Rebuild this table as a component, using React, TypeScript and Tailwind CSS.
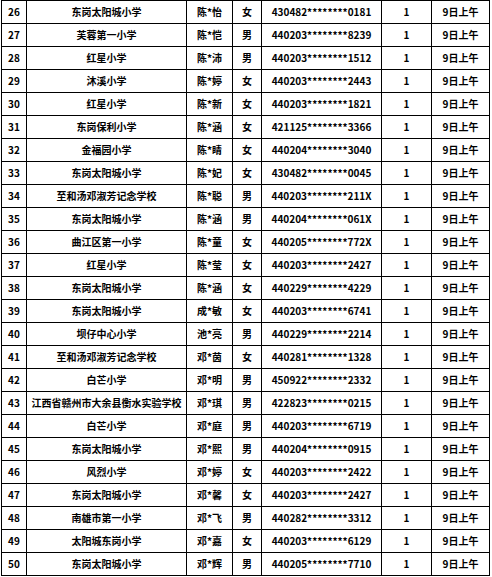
const rows: [string, string, string, string, string][] = [
  ["26", "东岗太阳城小学", "陈*怡", "女", "430482********0181"],
  ["27", "芙蓉第一小学", "陈*恺", "男", "440203********8239"],
  ["28", "红星小学", "陈*沛", "男", "440203********1512"],
  ["29", "沐溪小学", "陈*婷", "女", "440203********2443"],
  ["30", "红星小学", "陈*新", "女", "440203********1821"],
  ["31", "东岗保利小学", "陈*涵", "女", "421125********3366"],
  ["32", "金福园小学", "陈*睛", "女", "440204********3040"],
  ["33", "东岗太阳城小学", "陈*妃", "女", "430482********0045"],
  ["34", "至和汤邓淑芳记念学校", "陈*聪", "男", "440203********211X"],
  ["35", "东岗太阳城小学", "陈*涵", "男", "440204********061X"],
  ["36", "曲江区第一小学", "陈*童", "女", "440205********772X"],
  ["37", "红星小学", "陈*莹", "女", "440203********2427"],
  ["38", "东岗太阳城小学", "陈*涵", "女", "440229********4229"],
  ["39", "东岗太阳城小学", "成*敏", "女", "440203********6741"],
  ["40", "坝仔中心小学", "池*亮", "男", "440229********2214"],
  ["41", "至和汤邓淑芳记念学校", "邓*茵", "女", "440281********1328"],
  ["42", "白芒小学", "邓*明", "男", "450922********2332"],
  ["43", "江西省赣州市大余县衡水实验学校", "邓*琪", "男", "422823********0215"],
  ["44", "白芒小学", "邓*庭", "男", "440203********6719"],
  ["45", "东岗太阳城小学", "邓*熙", "男", "440204********0915"],
  ["46", "风烈小学", "邓*婷", "女", "440203********2422"],
  ["47", "东岗太阳城小学", "邓*馨", "女", "440203********2427"],
  ["48", "南雄市第一小学", "邓*飞", "男", "440282********3312"],
  ["49", "太阳城东岗小学", "邓*嘉", "女", "440203********6129"],
  ["50", "东岗太阳城小学", "邓*辉", "男", "440205********7710"],
];

const cell = "flex h-[23px] items-center justify-center border-r border-b border-black";

export default function App() {
  return (
    <div
      className="min-h-[577px] w-[492px] bg-white"
      style={{ fontFamily: '"Noto Sans CJK SC", "Noto Sans", sans-serif' }}
    >
      <div className="ml-[1px] grid w-fit grid-cols-[25px_160px_46px_29px_120px_50px_58px] border-t border-l border-black text-[10px] font-bold leading-none text-black">
        {rows.map((r) => (
          <div key={r[0]} className="contents">
            <div className={cell}>{r[0]}</div>
            <div className={`${cell} whitespace-nowrap`}>{r[1]}</div>
            <div className={cell}>{r[2]}</div>
            <div className={cell}>{r[3]}</div>
            <div className={cell}>{r[4]}</div>
            <div className={cell}>1</div>
            <div className={cell}>9日上午</div>
          </div>
        ))}
      </div>
    </div>
  );
}
